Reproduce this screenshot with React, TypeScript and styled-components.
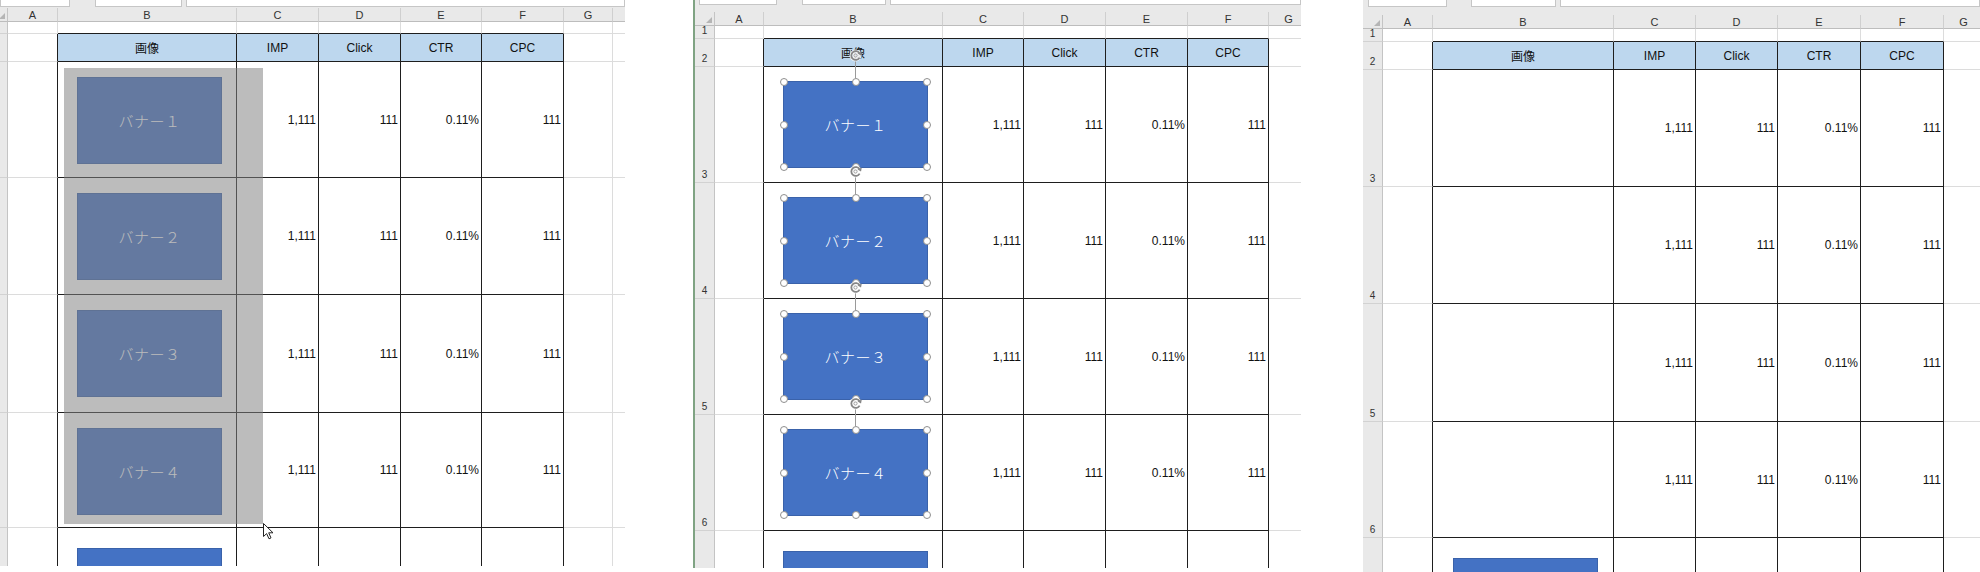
import React from 'react';
import styled, { createGlobalStyle } from 'styled-components';

const GlobalStyle = createGlobalStyle`
  html, body { margin: 0; padding: 0; background: #fff; }
  body { font-family: "Liberation Sans", Arial, "Noto Sans CJK JP", sans-serif; }
`;

type Mode = 'ghost' | 'selected' | 'empty';

type SheetSpec = {
  offset: number;
  width: number;
  height: number;
  edge: boolean;
  stripH: number;
  boxH: number;
  boxes: [number, number][]; // [margin-left, width], width 0 = rest
  rowHeaderW: number;
  headerH: number;
  cols: number[];
  letters: number; // how many columns show a letter
  rows: number[];
  numbers: boolean;
  mode: Mode;
  bannerTop: number;
  bannerLeft: number;
  lastTop: number;
  lastLeft: number;
};

const LETTERS = ['A', 'B', 'C', 'D', 'E', 'F', 'G', 'H'];
const HEADS = ['画像', 'IMP', 'Click', 'CTR', 'CPC'];
const VALUES = ['1,111', '111', '0.11%', '111'];
const LABELS = ['バナー１', 'バナー２', 'バナー３', 'バナー４'];

const Page = styled.div`
  display: flex;
  align-items: flex-start;
  width: 1980px;
  height: 572px;
  overflow: hidden;
`;

const Panel = styled.div<{ $offset: number; $w: number; $h: number; $edge: boolean }>`
  position: relative;
  flex: none;
  box-sizing: border-box;
  margin-left: ${p => p.$offset}px;
  width: ${p => p.$w}px;
  height: ${p => p.$h}px;
  overflow: hidden;
  display: flex;
  flex-direction: column;
  background: #fff;
  border-left: ${p => (p.$edge ? '2px solid #7fa383' : 'none')};
`;

const Strip = styled.div<{ $h: number }>`
  flex: none;
  height: ${p => p.$h}px;
  background: #e9e9e9;
  display: flex;
  align-items: flex-start;
`;

const FieldBox = styled.div<{ $ml: number; $w: number; $h: number }>`
  flex: ${p => (p.$w ? 'none' : '1')};
  margin-left: ${p => p.$ml}px;
  width: ${p => (p.$w ? `${p.$w}px` : 'auto')};
  height: ${p => p.$h}px;
  box-sizing: border-box;
  background: #fff;
  border: 1px solid #c6c6c6;
  border-top: none;
`;

const Grid = styled.div<{ $cols: number[]; $rows: number[] }>`
  display: grid;
  grid-template-columns: ${p => p.$cols.map(c => `${c}px`).join(' ')};
  grid-template-rows: ${p => p.$rows.map(r => `${r}px`).join(' ')};
`;

const Corner = styled.div`
  position: relative;
  background: #e9e9e9;
  border-right: 1px solid #c4c4c4;
  border-bottom: 1px solid #bdbdbd;
  box-sizing: border-box;
  &::after {
    content: '';
    position: absolute;
    right: 2px;
    bottom: 2px;
    border-left: 6px solid transparent;
    border-bottom: 6px solid #b5b5b5;
  }
`;

const ColHead = styled.div`
  background: #e9e9e9;
  border-right: 1px solid #cfcfcf;
  border-bottom: 1px solid #bdbdbd;
  box-sizing: border-box;
  display: flex;
  align-items: center;
  justify-content: center;
  font-size: 11px;
  color: #333;
`;

const RowHead = styled.div`
  background: #e9e9e9;
  border-right: 1px solid #c4c4c4;
  border-bottom: 1px solid #d2d2d2;
  box-sizing: border-box;
  display: flex;
  align-items: flex-end;
  justify-content: center;
  padding-bottom: 1px;
  font-size: 10px;
  line-height: 12px;
  color: #333;
`;

const Cell = styled.div<{ $right: boolean; $bottom: boolean; $head: boolean; $align: 'left' | 'center' | 'right' }>`
  position: relative;
  box-sizing: border-box;
  border-right: 1px solid ${p => (p.$right ? '#1e1e1e' : '#dcdcdc')};
  border-bottom: 1px solid ${p => (p.$bottom ? '#1e1e1e' : '#dcdcdc')};
  background: ${p => (p.$head ? '#bdd7ee' : '#fff')};
  display: flex;
  align-items: ${p => (p.$align === 'left' ? 'flex-start' : 'center')};
  justify-content: ${p =>
    p.$align === 'left' ? 'flex-start' : p.$align === 'center' ? 'center' : 'flex-end'};
  padding-right: ${p => (p.$align === 'right' ? '2px' : '0')};
  font-family: "Liberation Sans Narrow", "Liberation Sans", "Noto Sans CJK JP", sans-serif;
  font-size: 12px;
  color: #111;
`;

const Banner = styled.div<{ $mt: number; $ml: number }>`
  position: relative;
  flex: none;
  margin-top: ${p => p.$mt}px;
  margin-left: ${p => p.$ml}px;
  width: 145px;
  height: 87px;
  box-sizing: border-box;
  background: #4472c4;
  border: 1px solid #3a62aa;
  display: flex;
  align-items: center;
  justify-content: center;
  color: #fff;
  font-family: "Noto Sans CJK JP", sans-serif;
  font-weight: 300;
  font-size: 15px;
  letter-spacing: 0.5px;
`;

const Handle = styled.span<{ $x: number; $y: number }>`
  position: absolute;
  left: calc(${p => p.$x}% - 4px);
  top: calc(${p => p.$y}% - 4px);
  width: 8px;
  height: 8px;
  box-sizing: border-box;
  border-radius: 50%;
  background: #fff;
  border: 1px solid #8e8e8e;
  z-index: 2;
`;

const Stem = styled.span`
  position: absolute;
  left: calc(50% - 0.5px);
  top: -21px;
  width: 1px;
  height: 17px;
  background: #9a9a9a;
`;

const Rotate = styled.svg`
  position: absolute;
  left: calc(50% - 7px);
  top: -33px;
  width: 14px;
  height: 13px;
  z-index: 2;
`;

const Ghost = styled.div<{ $x: number; $y: number; $w: number; $h: number }>`
  position: absolute;
  left: ${p => p.$x}px;
  top: ${p => p.$y}px;
  width: ${p => p.$w}px;
  height: ${p => p.$h}px;
  background: rgba(128, 128, 128, 0.53);
  z-index: 5;
`;

const Cursor = styled.svg`
  position: absolute;
  left: 263px;
  top: 523px;
  width: 11px;
  height: 17px;
  z-index: 6;
`;

const HANDLES: [number, number][] = [
  [0, 0], [50, 0], [100, 0],
  [0, 50], [100, 50],
  [0, 100], [50, 100], [100, 100],
];

const Selection = () => (
  <>
    <Stem />
    <Rotate viewBox="0 0 14 13">
      <circle cx="6.5" cy="6.5" r="6" fill="#fff" fillOpacity="0.85" />
      <path d="M10.6 4.4 A4.4 4.4 0 1 0 10.6 8.6" fill="none" stroke="#868686" strokeWidth="1.8" />
      <circle cx="6.5" cy="6.5" r="1.6" fill="none" stroke="#a0a0a0" strokeWidth="1" />
      <path d="M12.8 2.6 L12 6.6 L8.6 4.6 Z" fill="#868686" />
    </Rotate>
    {HANDLES.map(([x, y]) => (
      <Handle key={`${x}-${y}`} $x={x} $y={y} />
    ))}
  </>
);

const Sheet = ({ s }: { s: SheetSpec }) => {
  const renderCell = (r: number, c: number) => {
    const inTable = c >= 1 && c <= 5;
    const right = (inTable || c === 0) && r >= 2;
    const bottom = inTable && r >= 1;
    const head = inTable && r === 2;
    let align: 'left' | 'center' | 'right' = 'right';
    let content: React.ReactNode = null;

    if (head) {
      align = 'center';
      content = HEADS[c - 1];
    } else if (r >= 3 && r <= 6 && c >= 2 && c <= 5) {
      content = VALUES[c - 2];
    } else if (c === 1 && r >= 3 && r <= 6 && s.mode !== 'empty') {
      align = 'left';
      content = (
        <Banner $mt={s.bannerTop} $ml={s.bannerLeft}>
          {LABELS[r - 3]}
          {s.mode === 'selected' && <Selection />}
        </Banner>
      );
    } else if (c === 1 && r === 7) {
      align = 'left';
      content = <Banner $mt={s.lastTop} $ml={s.lastLeft} />;
    }

    return (
      <Cell key={`${r}-${c}`} $right={right} $bottom={bottom} $head={head} $align={align}>
        {content}
      </Cell>
    );
  };

  return (
    <Panel $offset={s.offset} $w={s.width} $h={s.height} $edge={s.edge}>
      <Strip $h={s.stripH}>
        {s.boxes.map(([ml, w], i) => (
          <FieldBox key={i} $ml={ml} $w={w} $h={s.boxH} />
        ))}
      </Strip>
      <Grid $cols={[s.rowHeaderW, ...s.cols]} $rows={[s.headerH, ...s.rows]}>
        <Corner />
        {s.cols.map((_, c) => (
          <ColHead key={c}>{c < s.letters ? LETTERS[c] : ''}</ColHead>
        ))}
        {s.rows.map((_, ri) => {
          const r = ri + 1;
          return (
            <React.Fragment key={r}>
              <RowHead>{s.numbers && r < 7 ? r : ''}</RowHead>
              {s.cols.map((__, c) => renderCell(r, c))}
            </React.Fragment>
          );
        })}
      </Grid>
      {s.mode === 'ghost' && (
        <>
          <Ghost $x={64} $y={68} $w={199} $h={456} />
          <Cursor viewBox="0 0 11 17">
            <path d="M0.5 0.5 L0.5 13.5 L3.6 10.6 L6 15.8 L8 14.9 L5.7 9.8 L10 9.8 Z" fill="#fff" stroke="#222" strokeWidth="1" strokeLinejoin="round" />
          </Cursor>
        </>
      )}
    </Panel>
  );
};

const SHEETS: SheetSpec[] = [
  {
    offset: 0, width: 625, height: 566, edge: false,
    stripH: 8, boxH: 7, boxes: [[0, 70], [25, 87], [4, 0]],
    rowHeaderW: 8, headerH: 14,
    cols: [50, 179, 82, 82, 81, 82, 49, 20], letters: 7,
    rows: [12, 28, 116, 117, 118, 115, 117],
    numbers: false, mode: 'ghost',
    bannerTop: 15, bannerLeft: 19, lastTop: 20, lastLeft: 19,
  },
  {
    offset: 68, width: 608, height: 568, edge: true,
    stripH: 12, boxH: 5, boxes: [[4, 78], [25, 84], [4, 0]],
    rowHeaderW: 20, headerH: 14,
    cols: [49, 179, 81, 82, 82, 81, 40], letters: 7,
    rows: [13, 28, 116, 116, 116, 116, 117],
    numbers: true, mode: 'selected',
    bannerTop: 14, bannerLeft: 19, lastTop: 20, lastLeft: 19,
  },
  {
    offset: 62, width: 617, height: 572, edge: false,
    stripH: 15, boxH: 7, boxes: [[5, 79], [24, 85], [4, 0]],
    rowHeaderW: 20, headerH: 14,
    cols: [50, 181, 82, 82, 83, 83, 40], letters: 7,
    rows: [13, 28, 117, 117, 118, 116, 117],
    numbers: true, mode: 'empty',
    bannerTop: 14, bannerLeft: 19, lastTop: 20, lastLeft: 20,
  },
];

const App = () => (
  <>
    <GlobalStyle />
    <Page>
      {SHEETS.map((s, i) => (
        <Sheet key={i} s={s} />
      ))}
    </Page>
  </>
);

export default App;
